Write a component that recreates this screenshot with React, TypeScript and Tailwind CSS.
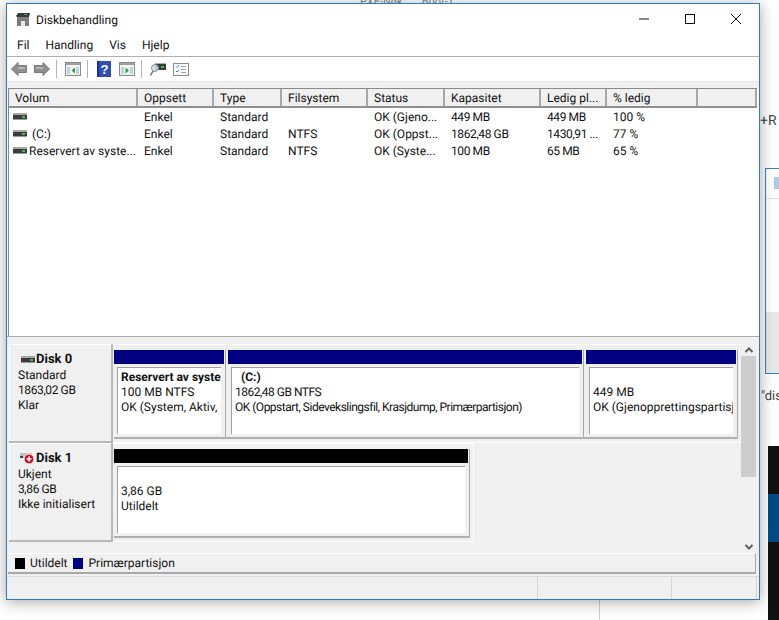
import React from 'react';

const COLS = [
  { label: 'Volum', w: 129 },
  { label: 'Oppsett', w: 76 },
  { label: 'Type', w: 68 },
  { label: 'Filsystem', w: 86 },
  { label: 'Status', w: 77 },
  { label: 'Kapasitet', w: 96 },
  { label: 'Ledig pl...', w: 66 },
  { label: '% ledig', w: 91 },
  { label: '', w: 59 },
];

const ROWS = [
  ['', 'Enkel', 'Standard', '', 'OK (Gjeno...', '449 MB', '449 MB', '100 %'],
  [' (C:)', 'Enkel', 'Standard', 'NTFS', 'OK (Oppst...', '1862,48 GB', '1430,91 ...', '77 %'],
  ['Reservert av syste...', 'Enkel', 'Standard', 'NTFS', 'OK (Syste...', '100 MB', '65 MB', '65 %'],
];

function DriveIcon({ className = '' }: { className?: string }) {
  return (
    <svg width="14" height="7" viewBox="0 0 14 7" className={className}>
      <rect x="0" y="0" width="14" height="2" fill="#a8a8a8" />
      <rect x="0" y="2" width="14" height="4" fill="#3c3c3c" />
      <rect x="9" y="3" width="3" height="2" fill="#38c048" />
      <rect x="0" y="6" width="14" height="1" fill="#9a9a9a" />
    </svg>
  );
}

function AppIcon() {
  return (
    <svg width="16" height="16" viewBox="0 0 16 16">
      <path d="M1 5 L3 2 H15 L14 6 H2 Z" fill="#3a3a3a" />
      <rect x="9" y="3" width="3" height="1" fill="#40c050" />
      <path d="M2 6 H14 V15 H10 V10 H6 V15 H2 Z" fill="#7d7d7d" />
      <rect x="6" y="10" width="4" height="5" fill="#e8e8e8" />
    </svg>
  );
}

function Arrow({ flip = false }: { flip?: boolean }) {
  return (
    <svg width="16" height="14" viewBox="0 0 16 14" className={flip ? '-scale-x-100' : ''}>
      <path d="M0.5 7 L7 0.5 V3.5 H15.5 V10.5 H7 V13.5 Z" fill="#8f8f8f" stroke="#777" strokeWidth="1" strokeLinejoin="round" />
      <rect x="7" y="5" width="7" height="2" fill="#b4b4b4" />
    </svg>
  );
}

function PaneIcon({ side }: { side: 'left' | 'right' }) {
  return (
    <svg width="16" height="14" viewBox="0 0 16 14">
      <rect x="0.5" y="0.5" width="15" height="13" fill="#f4f4f4" stroke="#8a8a8a" />
      <rect x="1" y="1" width="14" height="2" fill="#a0a0a0" />
      <rect x="2" y="5" width="3" height="7" fill="#bcd3ea" />
      <rect x="11" y="5" width="3" height="7" fill="#bcd3ea" />
      {side === 'left' ? <path d="M10 5.5 V11.5 L6.5 8.5 Z" fill="#2ca02c" /> : <path d="M6.5 5.5 V11.5 L10 8.5 Z" fill="#2ca02c" />}
    </svg>
  );
}

function HelpIcon() {
  return (
    <svg width="14" height="16" viewBox="0 0 14 16">
      <rect width="14" height="16" fill="#2f4fb5" />
      <rect x="0" y="0" width="2" height="16" fill="#1d2f86" />
      <text x="7.5" y="13" textAnchor="middle" fontSize="13" fontWeight="700" fill="#fff" fontFamily="Liberation Sans, sans-serif">?</text>
    </svg>
  );
}

function SearchDriveIcon() {
  return (
    <svg width="16" height="16" viewBox="0 0 16 16">
      <rect x="5" y="3" width="11" height="6" fill="#3c3c3c" />
      <rect x="11" y="5" width="3" height="2" fill="#38c048" />
      <rect x="5" y="2" width="11" height="1" fill="#b0b0b0" />
      <circle cx="5" cy="7" r="3.5" fill="#cfe0ee" fillOpacity="0.85" stroke="#8a8a8a" />
      <path d="M3 10 L0.5 14.5" stroke="#777" strokeWidth="1.5" />
    </svg>
  );
}

function ChecklistIcon() {
  return (
    <svg width="16" height="13" viewBox="0 0 16 13">
      <rect x="0.5" y="0.5" width="15" height="12" fill="#fafafa" stroke="#8a8a8a" />
      <path d="M3 3.5 L4 4.5 L6 2.5 M3 8 L4 9 L6 7" stroke="#3a80c8" fill="none" />
      <path d="M8 3.5 H13 M8 6.5 H13 M8 9.5 H13" stroke="#a0a0a0" />
    </svg>
  );
}

function ToolSep() {
  return <div className="w-px h-[18px] bg-[#b4b4b4]" />;
}

function Partition({ width, color, lines, bold, tight }: { width: number; color: string; lines: string[]; bold?: string; tight?: boolean }) {
  return (
    <div className="shrink-0 flex flex-col h-full border-r border-[#a8a8a8] pr-px" style={{ width }}>
      <div className="h-[14px] shrink-0" style={{ backgroundColor: color }} />
      <div className="flex-1 p-[3px] flex">
        <div className="flex-1 min-w-0 bg-white border-t border-l border-[#a0a0a0] pl-[3px] pt-[2px] overflow-hidden whitespace-pre leading-[15px]">
          {bold !== undefined ? <div className="font-bold">{bold}</div> : <div className="h-[15px]" />}
          {lines.map((l) => (
            <div key={l} className={tight ? 'tracking-[-0.5px]' : ''}>{l}</div>
          ))}
        </div>
      </div>
    </div>
  );
}

function DiskLabel({ name, lines, icon }: { name: string; lines: string[]; icon: React.ReactNode }) {
  return (
    <div className="w-[104px] shrink-0 bg-[#f0f0f0] border-r-2 border-b-2 border-[#b8b8b8] pl-[9px] pt-[8px] leading-[15px] shadow-[inset_1px_1px_0_#fff]">
      <div className="flex items-center font-bold text-[13px] h-[15px] mb-px">
        {icon}
        <span>{name}</span>
      </div>
      {lines.map((l) => (
        <div key={l} className={/^\d/.test(l) ? 'tracking-[-0.4px]' : ''}>{l}</div>
      ))}
    </div>
  );
}

export default function App() {
  return (
    <div
      className="relative w-[779px] h-[620px] overflow-hidden bg-white text-[12px] text-[#111] [text-rendering:geometricPrecision]"
      style={{ fontFamily: 'Roboto, "Liberation Sans", sans-serif' }}
    >
      {/* what shows behind the window */}
      <div className="absolute left-[345px] top-0 w-[150px] h-[3px] overflow-hidden text-[#888] text-[11px] leading-[3px] whitespace-pre pl-[15px]">PXE-Nøk       Boot-T</div>
      <div className="absolute left-[760px] top-[113px] text-[14px] leading-[16px] text-[#444]">+R</div>
      <div className="absolute left-[765px] top-[168px] w-[20px] h-[206px] border-l border-t border-b border-[#3a80c8] bg-white flex flex-col">
        <div className="h-[30px] border-b border-[#e4e4e4] pt-[8px] pl-[8px]">
          <div className="w-[8px] h-[12px] bg-[#a9cdea]" />
        </div>
        <div className="flex-1" />
        <div className="h-[61px] bg-[#e8e8e8]" />
      </div>
      <div className="absolute left-[761px] top-[389px] text-[13px] leading-[16px] text-[#444]">"dis</div>
      <div className="absolute left-[768px] top-[446px] w-[11px] h-[174px] bg-[#111]" />
      <div className="absolute left-[768px] top-[494px] w-[11px] h-[48px] bg-[#004b85]" />
      <div className="absolute left-[599px] top-[600px] w-px h-[20px] bg-[#cfcfcf]" />

      {/* window */}
      <div className="relative ml-[6px] mt-[3px] w-[754px] h-[597px] flex flex-col bg-white border border-[#2b7cc4] shadow-[0_2px_14px_rgba(0,0,0,0.35)]">
        <div className="h-[29px] shrink-0 flex items-center pl-[8px]">
          <AppIcon />
          <span className="ml-[5px] mt-[2px]">Diskbehandling</span>
          <div className="ml-auto flex items-center text-[#222]">
            <svg width="46" height="12" viewBox="0 0 46 12"><path d="M18 6 H28" stroke="#111" /></svg>
            <svg width="46" height="12" viewBox="0 0 46 12"><rect x="18.5" y="1.5" width="9" height="9" fill="none" stroke="#111" /></svg>
            <svg width="46" height="12" viewBox="0 0 46 12"><path d="M18 1 L28 11 M28 1 L18 11" stroke="#111" /></svg>
          </div>
        </div>
        <div className="h-[24px] shrink-0 flex items-center pl-[10px] gap-[16px] border-b border-[#b0b0b0]">
          <span>Fil</span>
          <span>Handling</span>
          <span>Vis</span>
          <span>Hjelp</span>
        </div>
        <div className="h-[24px] shrink-0 flex items-center pl-[4px]">
          <Arrow />
          <span className="w-[7px]" />
          <Arrow flip />
          <span className="w-[6px]" />
          <ToolSep />
          <span className="w-[8px]" />
          <PaneIcon side="left" />
          <span className="w-[6px]" />
          <ToolSep />
          <span className="w-[9px]" />
          <HelpIcon />
          <span className="w-[8px]" />
          <PaneIcon side="right" />
          <span className="w-[6px]" />
          <ToolSep />
          <span className="w-[8px]" />
          <SearchDriveIcon />
          <span className="w-[7px]" />
          <ChecklistIcon />
        </div>
        <div className="h-[7px] shrink-0 bg-[#f0f0f0] border-t border-[#e4e4e4]" />

        {/* volume list */}
        <div className="h-[248px] shrink-0 ml-px mr-[2px] bg-white border-l border-t border-[#8a8a8a]">
          <div className="h-[19px] flex bg-[#f0f0f0] border-b-2 border-[#8f8f8f]">
            {COLS.map((c, i) => (
              <div key={i} className="shrink-0 pl-[6px] border-r-2 border-[#a8a8a8] flex items-center whitespace-nowrap overflow-hidden" style={{ width: c.w }}>
                {c.label}
              </div>
            ))}
          </div>
          <div>
            {ROWS.map((r, i) => (
              <div key={i} className="h-[17px] flex items-center">
                {r.map((v, j) => (
                  <div
                    key={j}
                    className={`shrink-0 whitespace-pre overflow-hidden flex items-center ${j === 0 ? 'pl-[4px]' : 'pl-[6px]'} ${j === 5 || j === 6 ? 'tracking-[-0.4px]' : ''}`}
                    style={{ width: COLS[j].w }}
                  >
                    {j === 0 && <DriveIcon className="shrink-0 mr-[2px]" />}
                    {v}
                  </div>
                ))}
              </div>
            ))}
          </div>
        </div>

        {/* disk pane */}
        <div className="flex-1 min-h-0 flex flex-col bg-[#f0f0f0]">
          <div className="h-[8px] shrink-0 border-t border-[#a8a8a8]" />
          <div className="h-[209px] shrink-0 flex pl-[2px]">
            <div className="w-[732px] shrink-0">
              <div className="h-[99px] flex">
                <DiskLabel name="Disk 0" lines={['Standard', '1863,02 GB', 'Klar']} icon={<DriveIcon className="ml-[3px] mr-px shrink-0" />} />
                <div className="pl-px pt-[5px] pb-[3px] pr-[3px] border-t border-r border-b border-white">
                  <div className="flex h-full border-b-2 border-[#b0b0b0] gap-[2px]">
                    <Partition width={112} color="#000080" bold="Reservert av system" lines={['100 MB NTFS', 'OK (System, Aktiv, Primærpartisjon)']} />
                    <Partition width={356} color="#000080" bold="  (C:)" tight lines={['1862,48 GB NTFS', 'OK (Oppstart, Sidevekslingsfil, Krasjdump, Primærpartisjon)']} />
                    <Partition width={152} color="#000080" lines={['449 MB', 'OK (Gjenopprettingspartisjon)']} />
                  </div>
                </div>
              </div>
              <div className="h-[99px] flex">
                <DiskLabel
                  name="Disk 1"
                  lines={['Ukjent', '3,86 GB', 'Ikke initialisert']}
                  icon={
                    <svg width="16" height="13" viewBox="0 0 16 13" className="ml-px shrink-0 mr-px">
                      <rect x="1" y="1" width="12" height="5" fill="#bdbdbd" />
                      <rect x="1" y="4" width="3" height="2" fill="#444" />
                      <circle cx="10" cy="7" r="5" fill="#c8102e" stroke="#fff" />
                      <path d="M7.5 7 H12.5 M10 4.5 V9.5" stroke="#fff" strokeWidth="1.6" />
                    </svg>
                  }
                />
                <div className="pl-px pt-[5px] pb-[3px] pr-[3px] border-t border-r border-b border-white">
                  <div className="flex h-full border-b-2 border-[#b0b0b0]">
                    <Partition width={356} color="#000000" lines={['3,86 GB', 'Utildelt']} />
                  </div>
                </div>
              </div>
            </div>
            <div className="w-[15px] shrink-0 flex flex-col items-center bg-[#f0f0f0]">
              <svg width="10" height="12" viewBox="0 0 10 12" className="shrink-0"><path d="M1.5 8 L5 4.5 L8.5 8" fill="none" stroke="#606060" strokeWidth="2" /></svg>
              <div className="w-[15px] h-[121px] bg-[#cdcdcd]" />
              <div className="flex-1" />
              <svg width="10" height="13" viewBox="0 0 10 13" className="shrink-0"><path d="M1.5 5 L5 8.5 L8.5 5" fill="none" stroke="#606060" strokeWidth="2" /></svg>
            </div>
          </div>

          <div className="h-[21px] shrink-0 ml-px mr-[3px] flex items-center pl-[7px] border-t border-white border-b-2 border-b-[#a8a8a8] border-r border-r-[#a8a8a8]">
            <span className="w-[10px] h-[11px] bg-black mr-[5px]" />
            <span>Utildelt</span>
            <span className="w-[10px] h-[11px] bg-[#000080] ml-[5px] mr-[6px]" />
            <span>Primærpartisjon</span>
          </div>
          <div className="h-[2px] shrink-0" />
          <div className="flex-1 flex border-t border-[#dcdcdc]">
            <div className="w-[531px] border-r border-[#d4d4d4]" />
            <div className="w-[134px] border-r border-[#d4d4d4]" />
            <div className="w-[85px] border-r border-[#d4d4d4]" />
          </div>
        </div>
      </div>
    </div>
  );
}
